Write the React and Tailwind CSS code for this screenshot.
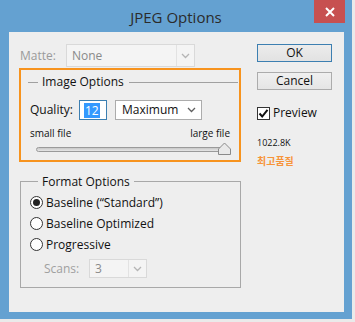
import React from "react";

const F = { fontFamily: '"Segoe UI", "Open Sans", "Noto Sans", sans-serif' };

function Chevron({ color = "#606060" }) {
  return (
    <svg width="9" height="6" viewBox="0 0 9 6">
      <path d="M1 1 L4.5 4.5 L8 1" fill="none" stroke={color} strokeWidth="1.3" />
    </svg>
  );
}

function Radio({ checked, label }) {
  return (
    <div className="flex items-center h-[21px]">
      <div className="w-[13px] h-[13px] rounded-full border border-[#333] bg-white flex items-center justify-center">
        {checked && <div className="w-[7px] h-[7px] rounded-full bg-[#222]" />}
      </div>
      <span className="ml-[3px] text-[12px] text-[#111]">{label}</span>
    </div>
  );
}

export default function App() {
  return (
    <div className="w-[355px] h-[322px] bg-[#eaeaea]" style={F}>
      <div className="w-[352px] h-[319px] bg-[#64a1d1] flex flex-col">
        <div className="h-[32px] relative flex items-center justify-center">
          <span className="text-[15px] text-[#2b2b2b] mt-[2px]">JPEG Options</span>
          <div className="absolute right-[7px] top-0 w-[31px] h-[23px] bg-[#c75050] flex items-center justify-center">
            <svg width="10" height="10" viewBox="0 0 10 10">
              <path d="M1 1 L9 9 M9 1 L1 9" stroke="#fff" strokeWidth="2" />
            </svg>
          </div>
        </div>
        <div className="mx-[9px] mr-[8px] h-[280px] bg-[#eeeeee] flex">
          {/* left column */}
          <div className="ml-[10px] w-[222px] flex flex-col">
            <div className="mt-[12px] h-[23px] flex items-center">
              <span className="ml-[1px] text-[12px] text-[#9a9a9a] w-[46px]">Matte:</span>
              <div className="w-[129px] h-[23px] border border-[#d9d9d9] bg-[#f4f4f4] flex">
                <div className="w-[110px] border-r border-[#e2e2e2] flex items-center pl-[5px] text-[12px] text-[#8a8a8a]">
                  None
                </div>
                <div className="flex-1 flex items-center justify-center">
                  <Chevron color="#b5b5b5" />
                </div>
              </div>
            </div>
            <div className="mt-[1px] h-[94px] border-2 border-[#f7931e] flex flex-col">
              <div className="mt-[4px] flex items-center h-[16px]">
                <div className="ml-[7px] w-[10px] h-px bg-[#a0a0a0]" />
                <span className="ml-[4px] text-[12px] text-[#111]">Image Options</span>
                <div className="ml-[5px] flex-1 h-px bg-[#a0a0a0] mr-[1px]" />
              </div>
              <div className="mt-[10px] flex items-center h-[20px]">
                <span className="ml-[9px] w-[49px] text-[12px] text-[#111]">Quality:</span>
                <div className="w-[28px] h-[20px] border border-[#3c7fb1] bg-white flex items-center pl-[4px]">
                  <span className="bg-[#3399ff] text-white text-[12px] leading-[15px] px-px">12</span>
                </div>
                <div className="ml-[8px] w-[87px] h-[20px] border border-[#acacac] bg-white flex items-center">
                  <span className="ml-[6px] text-[12px] text-[#111] flex-1">Maximum</span>
                  <span className="mr-[5px] flex"><Chevron /></span>
                </div>
              </div>
              <div className="mt-[7px] flex justify-between px-[9px] text-[10px] text-[#111] leading-[13px]">
                <span>small file</span>
                <span>large file</span>
              </div>
              <div className="relative mt-[3px] ml-[15px] w-[193px] h-[12px] flex items-center">
                <div className="w-full h-[5px] rounded-full border border-[#9a9a9a] bg-gradient-to-b from-[#c8c8c8] to-[#e6e6e6]" />
                <svg className="absolute right-[-2px] top-[-1px]" width="13" height="13" viewBox="0 0 13 13">
                  <path d="M0.5 12.5 L0.5 7 L6.5 1 L12.5 7 L12.5 12.5 Z" fill="#e9e9e9" stroke="#8a8a8a" />
                </svg>
              </div>
            </div>
            {/* Format options */}
            <div className="mt-[12px] ml-[1px] w-[221px] h-[114px] relative">
              <div className="absolute left-0 right-0 top-[7px] bottom-0 border border-[#a8a8a8]" />
              <div className="relative flex flex-col">
                <div className="flex h-[16px] items-center">
                  <span className="ml-[18px] px-[4px] bg-[#eeeeee] text-[12px] text-[#111]">Format Options</span>
                </div>
                <div className="ml-[10px] mt-[2px] flex flex-col">
                  <Radio checked label={'Baseline (\u201cStandard\u201d)'} />
                  <Radio label="Baseline Optimized" />
                  <Radio label="Progressive" />
                  <div className="mt-[4px] flex items-center h-[19px]">
                    <span className="ml-[14px] w-[45px] text-[12px] text-[#a0a0a0]">Scans:</span>
                    <div className="w-[58px] h-[19px] border border-[#d9d9d9] bg-[#f4f4f4] flex">
                      <div className="w-[39px] border-r border-[#e2e2e2] flex items-center pl-[5px] text-[12px] text-[#8a8a8a]">
                        3
                      </div>
                      <div className="flex-1 flex items-center justify-center">
                        <Chevron color="#b5b5b5" />
                      </div>
                    </div>
                  </div>
                </div>
              </div>
            </div>
          </div>
          {/* right column */}
          <div className="ml-[16px] w-[75px] flex flex-col">
            <div className="mt-[12px] h-[18px] border border-[#3c7fb1] bg-gradient-to-b from-[#ececec] to-[#e2e2e2] flex items-center justify-center text-[12px] text-[#111]">
              OK
            </div>
            <div className="mt-[10px] h-[18px] border border-[#acacac] bg-gradient-to-b from-[#f0f0f0] to-[#e5e5e5] flex items-center justify-center text-[12px] text-[#111]">
              Cancel
            </div>
            <div className="mt-[16px] flex items-center h-[14px]">
              <div className="w-[13px] h-[13px] border border-[#333] bg-white flex items-center justify-center">
                <svg width="11" height="11" viewBox="0 0 11 11">
                  <path d="M1.5 5.5 L4.2 8.5 L9.5 1.8" fill="none" stroke="#111" strokeWidth="2" />
                </svg>
              </div>
              <span className="ml-[3px] text-[12px] text-[#111]">Preview</span>
            </div>
            <div className="mt-[16px] text-[9px] text-[#111] leading-[13px]">1022.8K</div>
            <div
              className="mt-[5px] text-[10px] font-bold text-[#f7943a] leading-[13px]"
              style={{ fontFamily: '"Noto Sans CJK KR", sans-serif' }}
            >
              최고품질
            </div>
          </div>
        </div>
      </div>
    </div>
  );
}
